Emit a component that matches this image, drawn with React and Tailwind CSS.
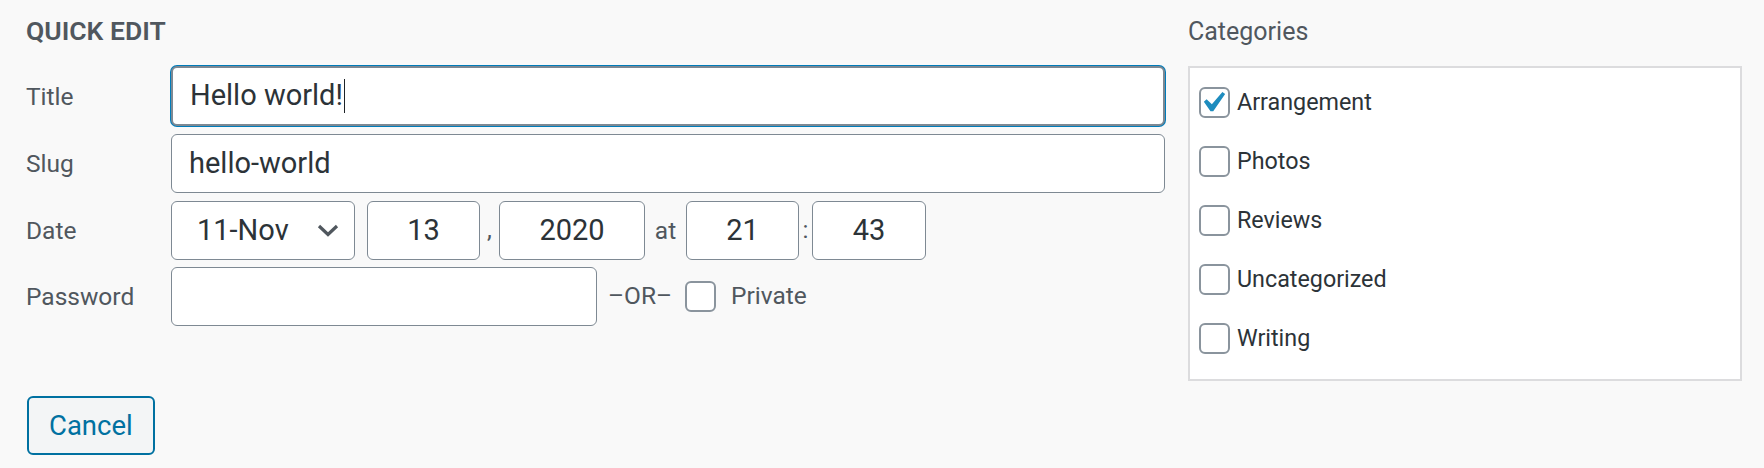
import React from "react";

const field =
  "flex h-[59px] items-center rounded-[6px] border border-[#7e8993] bg-white text-[29px] text-[#2c3338]";

function Row({ label, children, className = "" }) {
  return (
    <div className={`flex items-center ${className}`}>
      <span className="w-[145px] shrink-0 pt-[2px] text-[24.5px] text-[#50575e]">{label}</span>
      {children}
    </div>
  );
}

function Checkbox({ checked }) {
  return (
    <span className="relative inline-block h-[31px] w-[31px] shrink-0 rounded-[6px] border-2 border-[#8a949d] bg-white">
      {checked && (
        <svg
          viewBox="0 0 20 20"
          className="absolute left-[-9px] top-[-7px] h-[41px] w-[41px]"
        >
          <path
            d="M14.83 4.89l1.34.94-5.81 8.38H9.02L5.78 9.67l1.34-1.25 2.57 2.4z"
            fill="#1e8cbe"
          />
        </svg>
      )}
    </span>
  );
}

export default function App() {
  const categories = [
    { name: "Arrangement", checked: true },
    { name: "Photos" },
    { name: "Reviews" },
    { name: "Uncategorized" },
    { name: "Writing" },
  ];

  return (
    <div className="min-h-[468px] w-full bg-[#f9f9f9] font-['Roboto',sans-serif]">
      <div className="flex pl-[26px]">
        {/* left column */}
        <div className="w-[1139px]">
          <h2 className="flex h-[66px] items-center pb-[4px] text-[26.5px] font-semibold uppercase text-[#50575e]">
            Quick Edit
          </h2>

          <Row label="Title">
            <div className={`${field} h-[60px] flex-1 border-2 border-[#007cba] px-[17px] shadow-[0_0_0_1px_#007cba]`}>
              Hello world!
              <span className="ml-[1px] h-[34px] w-[1.5px] bg-[#1d2327]" />
            </div>
          </Row>

          <Row label="Slug" className="mt-[8px]">
            <div className={`${field} flex-1 px-[17px]`}>hello-world</div>
          </Row>

          <Row label="Date" className="mt-[8px]">
            <div className={`${field} w-[184px] justify-between pl-[25px] pr-[15px]`}>
              <span>11-Nov</span>
              <svg viewBox="0 0 22 13" className="h-[13px] w-[22px]">
                <polyline
                  points="2,2 11,10.5 20,2"
                  fill="none"
                  stroke="#50575e"
                  strokeWidth="3.2"
                />
              </svg>
            </div>
            <div className={`${field} ml-[12px] w-[113px] justify-center`}>13</div>
            <span className="w-[19px] text-center text-[24.5px] text-[#50575e]">,</span>
            <div className={`${field} w-[146px] justify-center`}>2020</div>
            <span className="w-[41px] pt-[2px] text-center text-[24.5px] text-[#50575e]">at</span>
            <div className={`${field} w-[113px] justify-center`}>21</div>
            <span className="w-[13px] text-center text-[24.5px] text-[#50575e]">:</span>
            <div className={`${field} w-[114px] justify-center`}>43</div>
          </Row>

          <Row label="Password" className="mt-[7px]">
            <div className={`${field} h-[58px] w-[426px]`} />
            <span className="ml-[11px] text-[24.5px] text-[#50575e]">–OR–</span>
            <span className="ml-[13px] flex items-center">
              <Checkbox />
            </span>
            <span className="ml-[15px] text-[24.5px] text-[#50575e]">Private</span>
          </Row>
        </div>

        {/* categories */}
        <div className="ml-[23px] w-[554px]">
          <div className="flex h-[66px] items-center pb-[2px] text-[25px] text-[#50575e]">
            Categories
          </div>
          <ul className="flex h-[315px] flex-col gap-[28px] border-2 border-[#dcdcde] bg-white pl-[9px] pt-[19px]">
            {categories.map((c) => (
              <li key={c.name} className="flex h-[31px] items-center gap-[7px] text-[23.3px] text-[#2c3338]">
                <Checkbox checked={c.checked} />
                {c.name}
              </li>
            ))}
          </ul>
        </div>
      </div>

      <div className="pl-[27px] pt-[15px]">
        <button className="h-[59px] rounded-[6px] border-2 border-[#0071a1] bg-[#f3f5f6] px-[20px] text-[27.5px] text-[#0071a1]">
          Cancel
        </button>
      </div>
    </div>
  );
}
